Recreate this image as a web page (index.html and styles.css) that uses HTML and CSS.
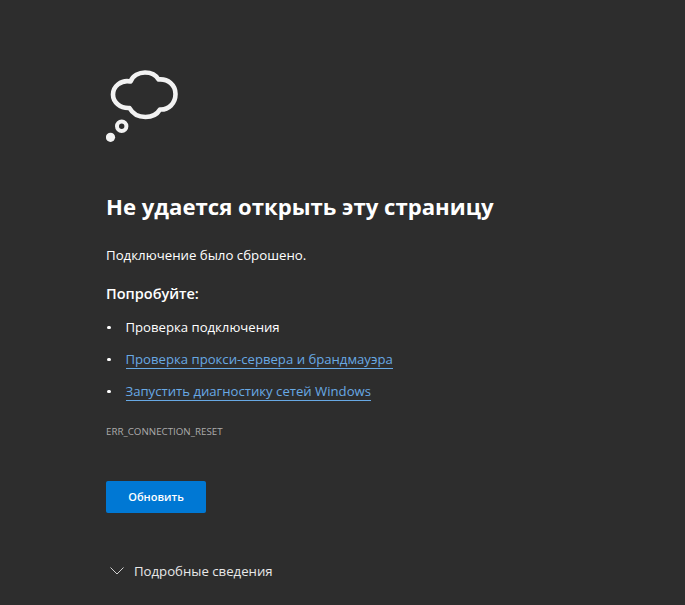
FILE: index.html
```html
<!DOCTYPE html>
<html lang="ru">
<head>
<meta charset="utf-8">
<title>Не удается открыть эту страницу</title>
<link rel="stylesheet" href="styles.css">
</head>
<body>
<main class="page">
  <svg class="cloud" width="76" height="80" viewBox="106 66 76 80" aria-hidden="true">
    <path class="cloud-line" d="M130.5 81.5C133 75.5 139 72.5 145 72.5C151 72.5 156 75 158.5 79.5C168 78.5 175.500 85 175.500 94C175.500 103.500 168.500 110 160 109.500C157 114.500 151 117 145.500 117C138.500 117 132.500 113.500 129.500 108C120 108.500 113 102 113 94.500C113 86.500 121 79.500 130.500 81.500Z"/>
    <circle class="ring" cx="121.700" cy="126.200" r="4.700"/>
    <circle class="dot" cx="110.500" cy="137.300" r="4.600"/>
  </svg>
  <h1 class="title">Не удается открыть эту страницу</h1>
  <p class="message">Подключение было сброшено.</p>
  <h2 class="try">Попробуйте:</h2>
  <ul class="tips">
    <li class="tip">Проверка подключения</li>
    <li class="tip"><a class="link" href="#">Проверка прокси-сервера и брандмауэра</a></li>
    <li class="tip"><a class="link" href="#">Запустить диагностику сетей Windows</a></li>
  </ul>
  <p class="code">ERR_CONNECTION_RESET</p>
  <button class="reload" type="button">Обновить</button>
  <div class="details">
    <svg class="chevron" width="14" height="8" viewBox="0 0 14 8" aria-hidden="true"><path d="M.5.5 7 7 13.500.5"/></svg>
    <span class="details-label">Подробные сведения</span>
  </div>
</main>
</body>
</html>
```
FILE: styles.css
```css
html, body {
  margin: 0;
  height: 100%;
  background: #2d2d2d;
  overflow: hidden;
}
body {
  font-family: "Open Sans", "Noto Sans", "Liberation Sans", sans-serif;
  color: #fff;
}
.page {
  display: flex;
  flex-direction: column;
  align-items: flex-start;
  padding: 66px 0 0 106px;
}
.cloud {
  display: block;
}
.cloud-line {
  fill: none;
  stroke: #f2f2f2;
  stroke-width: 4.600;
  stroke-linejoin: round;
}
.ring {
  fill: none;
  stroke: #f2f2f2;
  stroke-width: 4;
}
.dot {
  fill: #f2f2f2;
}
.title {
  margin: 44px 0 0;
  font-size: 22.150px;
  line-height: 32px;
  font-weight: 700;
  white-space: nowrap;
}
.message {
  margin: 23px 0 0;
  font-size: 13.250px;
  line-height: 20px;
}
.try {
  margin: 19px 0 0;
  font-size: 14.500px;
  line-height: 20px;
  font-weight: 600;
}
.tips {
  list-style: none;
  margin: 13px 0 0;
  padding: 0;
  display: flex;
  flex-direction: column;
  gap: 12px;
}
.tip {
  position: relative;
  padding-left: 19.500px;
  font-size: 13.150px;
  line-height: 20px;
}
.tip::before {
  content: "";
  position: absolute;
  left: 1px;
  top: 8.500px;
  width: 3.500px;
  height: 3.500px;
  border-radius: 50%;
  background: #fff;
}
.link {
  color: #68a9e4;
  text-decoration: none;
  border-bottom: 1px solid #68a9e4;
}
.code {
  margin: 21px 0 0;
  font-size: 9.750px;
  line-height: 20px;
  color: #ababab;
}
.reload {
  margin: 39px 0 0;
  width: 100px;
  height: 32px;
  padding: 0;
  border: 0;
  border-radius: 2px;
  background: #0078d4;
  color: #fff;
  font: 600 11px/32px "Open Sans", "Noto Sans", sans-serif;
}
.details {
  display: flex;
  align-items: center;
  gap: 10px;
  margin: 48px 0 0 4px;
}
.chevron {
  fill: none;
  stroke: #d0d0d0;
  stroke-width: 1;
}
.details-label {
  font-size: 13.200px;
  line-height: 20px;
  color: #e8e8e8;
}
```
